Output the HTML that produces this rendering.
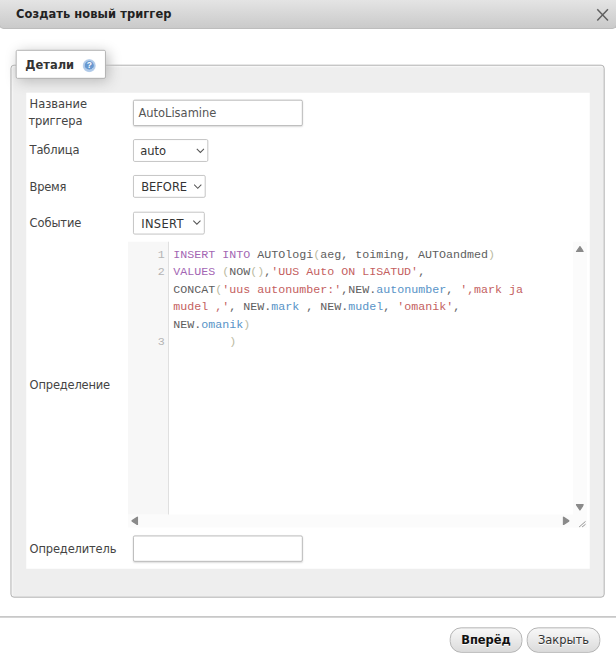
<!DOCTYPE html>
<html lang="ru">
<head>
<meta charset="utf-8">
<title>Создать новый триггер</title>
<style>
*{box-sizing:border-box}
html,body{margin:0;padding:0;background:#fff;width:616px;height:660px;overflow:hidden}
#root{position:absolute;left:0;top:0;width:704px;height:755px;transform:scale(0.875);transform-origin:0 0;font-family:"DejaVu Sans","Liberation Sans",sans-serif;font-size:13.12px;color:#444;background:#fff;overflow:hidden}
.titlebar{position:absolute;left:-1px;top:0;width:706px;height:33.4px;background:linear-gradient(#e4e4e4,#cacaca);border:1px solid #b4b4b4;border-top:0;border-radius:0 0 5px 5px}
.titlebar .t{position:absolute;left:18.3px;top:6.2px;font-weight:bold;letter-spacing:0.07px;line-height:20px;color:#222;white-space:nowrap}
.close{position:absolute;left:681px;top:9px;width:16px;height:16px}
.fs{position:absolute;left:12.4px;top:73.5px;width:678.8px;height:609.5px;border:1px solid #a8a8a8;border-radius:4px;background:#eee;box-shadow:1px 1px 2px #fff inset}
.legend{position:absolute;left:18.4px;top:57.3px;width:103px;height:32.8px;background:#fff;border:1px solid #aaa;border-radius:2px;box-shadow:3px 3px 15px #bbb;font-weight:bold;color:#333;white-space:nowrap}
.legend span{position:absolute;left:9.5px;top:7.1px;line-height:20px}
.help{position:absolute;left:74.6px;top:8.5px;width:16px;height:16px}
.table{position:absolute;left:29.6px;top:105.8px;width:644.8px;height:543.8px;background:#fff}
.lbl{position:absolute;left:33.8px;line-height:20px;color:#444;white-space:nowrap}
.txt{position:absolute;left:152.2px;width:193.7px;height:30px;border:1px solid #b4b4b4;border-radius:2px;background:#fff;box-shadow:0 1px 2px #ddd;line-height:28px;color:#555;padding:1.2px 5px 0 5px;white-space:nowrap}
.sel{position:absolute;left:152.3px;height:26.2px;border:1px solid #bbb;border-radius:2px;background:#fff;line-height:24.2px;color:#333;padding:1.2px 0 0 7.2px;white-space:nowrap}
.sel svg{position:absolute;right:2.7px;top:8.8px}
.cm{position:absolute;left:146.3px;top:276px;width:525px;height:327px;background:#fff;overflow:hidden}
.gutter{position:absolute;left:0;top:0;width:46.8px;height:311.6px;background:#f7f7f7;border-right:1px solid #ddd}
.ln{position:absolute;left:0;width:42px;text-align:right;font-family:"Liberation Mono",monospace;font-size:13.33px;line-height:20px;color:#b4b4b4}
.cl{position:absolute;left:51.6px;font-family:"Liberation Mono",monospace;font-size:13.33px;line-height:20px;color:#5e5e5e;white-space:pre}
.k{color:#a366b3}.s{color:#c45f5f}.v{color:#5893c7}.b{color:#bbbba2}
.vs{position:absolute;left:508.6px;top:0;width:16.4px;height:327px;background:#fbfbfb}
.hs{position:absolute;left:0;top:311.6px;width:525px;height:15.4px;background:#fbfbfb}
.footer{position:absolute;left:0;top:704.3px;width:704px;height:1.7px;background:#c8c8c8}
.btn{position:absolute;top:716.5px;height:29.5px;border:1px solid #aaa;border-radius:13px;background:linear-gradient(#f8f8f8,#dbdbdb);text-shadow:0 1px 0 #fff;line-height:27.5px;text-align:center;color:#111;white-space:nowrap}
</style>
</head>
<body>
<div id="root">
<div class="titlebar"><div class="t">Создать новый триггер</div>
<svg class="close" viewBox="0 0 16 16"><path d="M1.6 1.6L13.8 14.4M13.8 1.6L1.6 14.4" stroke="#606060" stroke-width="1.7" fill="none"/></svg>
</div>
<div class="fs"></div>
<div class="legend"><span>Детали</span>
<svg class="help" viewBox="0 0 16 16"><defs><radialGradient id="hg" cx="50%" cy="50%" r="50%"><stop offset="0" stop-color="#6696cf"/><stop offset="0.62" stop-color="#6899d0"/><stop offset="0.72" stop-color="#a9c5e7"/><stop offset="0.9" stop-color="#b7cfeb"/><stop offset="1" stop-color="#d5e3f4"/></radialGradient></defs><circle cx="8" cy="8" r="7.6" fill="url(#hg)"/><path d="M3.6 10.6A5.2 5.2 0 0 0 12.4 10.6" stroke="#c4d8ef" stroke-width="0.9" fill="none"/><text x="8" y="11" font-size="9.6" font-weight="bold" font-family="Liberation Sans,sans-serif" fill="#fff" text-anchor="middle">?</text></svg>
</div>
<div class="table"></div>
<div class="lbl" style="top:109.3px">Название</div>
<div class="lbl" style="top:129.3px;margin-left:-1.3px;letter-spacing:-0.13px">триггера</div>
<div class="txt" style="top:113.5px">AutoLisamine</div>
<div class="lbl" style="top:161.8px;letter-spacing:-0.15px">Таблица</div>
<div class="sel" style="top:158.8px;width:85.4px;padding-left:6.9px">auto<svg width="10" height="7" viewBox="0 0 10 7"><path d="M0.9 1.1L5 5.2L9.1 1.1" stroke="#555" stroke-width="1.15" fill="none"/></svg></div>
<div class="lbl" style="top:204.1px;letter-spacing:-0.27px">Время</div>
<div class="sel" style="top:200.2px;width:82.4px;padding-left:8px">BEFORE<svg width="10" height="7" viewBox="0 0 10 7"><path d="M0.9 1.1L5 5.2L9.1 1.1" stroke="#555" stroke-width="1.15" fill="none"/></svg></div>
<div class="lbl" style="top:245px;letter-spacing:-0.11px">Событие</div>
<div class="sel" style="top:241.6px;width:81.4px;padding-left:8px;letter-spacing:0.42px">INSERT<svg width="10" height="7" viewBox="0 0 10 7"><path d="M0.9 1.1L5 5.2L9.1 1.1" stroke="#555" stroke-width="1.15" fill="none"/></svg></div>
<div class="cm">
<div class="vs">
<svg style="position:absolute;left:3px;top:4.6px" width="9.6" height="7.6" viewBox="0 0 8.4 6.6"><path d="M0.6 6L4.2 0.6L7.8 6Z" fill="#8a8a8a" stroke="#8a8a8a" stroke-width="1.2" stroke-linejoin="round"/></svg>
<svg style="position:absolute;left:3px;top:300.2px" width="9.6" height="7.6" viewBox="0 0 8.4 6.6"><path d="M0.6 0.6L4.2 6L7.8 0.6Z" fill="#8a8a8a" stroke="#8a8a8a" stroke-width="1.2" stroke-linejoin="round"/></svg>
</div>
<div class="hs">
<svg style="position:absolute;left:4px;top:2.3px" width="8" height="10.6" viewBox="0 0 6.6 8.4"><path d="M6 0.6L0.6 4.2L6 7.8Z" fill="#8a8a8a" stroke="#8a8a8a" stroke-width="1.2" stroke-linejoin="round"/></svg>
<svg style="position:absolute;left:497px;top:2.3px" width="8" height="10.6" viewBox="0 0 6.6 8.4"><path d="M0.6 0.6L6 4.2L0.6 7.8Z" fill="#8a8a8a" stroke="#8a8a8a" stroke-width="1.2" stroke-linejoin="round"/></svg>
</div>
<div class="gutter">
<div class="ln" style="top:5.6px">1</div>
<div class="ln" style="top:25.2px">2</div>
<div class="ln" style="top:105.2px">3</div>
</div>
<div class="cl" style="top:5.6px"><span class="k">INSERT</span> <span class="k">INTO</span> AUTOlogi<span class="b">(</span>aeg, toiming, AUTOandmed<span class="b">)</span></div>
<div class="cl" style="top:25.2px"><span class="k">VALUES</span> <span class="b">(</span>NOW<span class="b">()</span>,<span class="s">'UUS Auto ON LISATUD'</span>,</div>
<div class="cl" style="top:45.6px">CONCAT<span class="b">(</span><span class="s">'uus autonumber:'</span>,NEW.<span class="v">autonumber</span>, <span class="s">',mark ja</span></div>
<div class="cl" style="top:65.2px"><span class="s">mudel ,'</span>, NEW.<span class="v">mark</span> , NEW.<span class="v">mudel</span>, <span class="s">'omanik'</span>,</div>
<div class="cl" style="top:85.6px">NEW.<span class="v">omanik</span><span class="b">)</span></div>
<div class="cl" style="top:105.2px">        <span class="b">)</span></div>
<svg style="position:absolute;left:515px;top:319px" width="9" height="8" viewBox="0 0 8 7"><path d="M0.7 6.5L7.3 0.7M3.7 6.5L7.3 3.6" stroke="#888" stroke-width="0.9" fill="none"/></svg>
</div>
<div class="lbl" style="top:431px;letter-spacing:-0.19px">Определение</div>
<div class="lbl" style="top:617.8px;letter-spacing:-0.17px">Определитель</div>
<div class="txt" style="top:611.8px"></div>
<div class="footer"></div>
<div class="btn" style="left:514.3px;width:82.3px;font-weight:bold">Вперёд</div>
<div class="btn" style="left:602.3px;width:83.4px;color:#333">Закрыть</div>
</div>
</body>
</html>
